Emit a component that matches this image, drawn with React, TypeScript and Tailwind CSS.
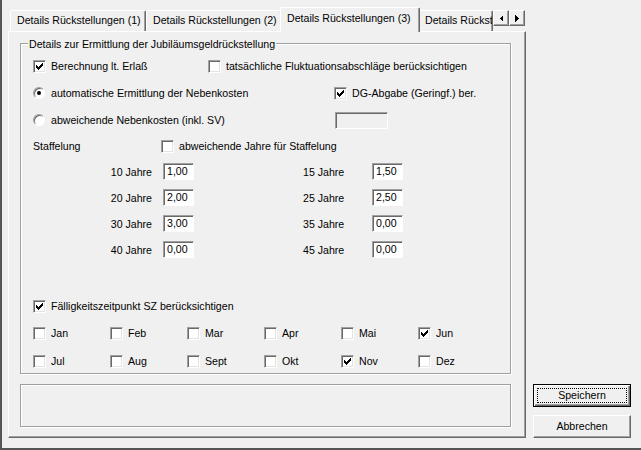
import React from 'react';

const CHECK = [
    '......X',
    '.....XX',
    'X...XXX',
    'XX.XXX.',
    'XXXXX..',
    '.XXX...',
    '..X....',
];

const CheckMark = () => (
    <svg width="7" height="7" viewBox="0 0 7 7" shapeRendering="crispEdges">
        {CHECK.map((row, y) =>
            row.split('').map((c, x) =>
                c === 'X' ? <rect key={`${x}-${y}`} x={x} y={y} width="1" height="1" fill="#000" /> : null
            )
        )}
    </svg>
);

const CheckBox = ({ checked }: { checked?: boolean }) => (
    <div className="w-[13px] h-[13px] shrink-0 bg-white border border-t-[#a0a0a0] border-l-[#a0a0a0] border-r-white border-b-white shadow-[inset_1px_1px_0_#696969,inset_-1px_-1px_0_#e3e3e3] flex items-center justify-center">
        {checked && <CheckMark />}
    </div>
);

const Radio = ({ checked }: { checked?: boolean }) => (
    <div className="w-[13px] shrink-0 flex">
        <div className="w-[12px] h-[12px] rounded-full bg-white border border-t-[#a0a0a0] border-l-[#a0a0a0] border-r-white border-b-white shadow-[inset_1px_1px_0_#696969] flex items-center justify-center">
            {checked && <div className="w-[4px] h-[4px] rounded-full bg-black" />}
        </div>
    </div>
);

const TextBox = ({ value, className }: { value?: string; className: string }) => (
    <div
        className={`h-[17px] shrink-0 border border-t-[#a0a0a0] border-l-[#a0a0a0] border-r-white border-b-white shadow-[inset_1px_1px_0_#696969] pl-[3px] leading-[15px] ${className}`}
    >
        {value}
    </div>
);

const Check = ({ label, checked, width }: { label: string; checked?: boolean; width?: string }) => (
    <div className={`flex items-center gap-[5px] shrink-0 ${width ?? ''}`}>
        <CheckBox checked={checked} />
        <span className="whitespace-nowrap pt-px">{label}</span>
    </div>
);

const Tab = ({ label, active, className }: { label: string; active?: boolean; className?: string }) =>
    active ? (
        <div className="relative z-10 w-[140px] h-[25px] -mx-[2px] -mb-px shrink-0 bg-[#f0f0f0] border-t border-l border-white border-r border-r-[#696969] rounded-t-[2px] shadow-[inset_-1px_0_0_#a0a0a0] pl-[6px] pt-[4px] leading-[13px] whitespace-nowrap">
            {label}
        </div>
    ) : (
        <div
            className={`h-[21px] shrink-0 border-t border-l border-white border-r border-r-[#696969] rounded-t-[2px] shadow-[inset_-1px_0_0_#a0a0a0] pl-[6px] pt-[3px] leading-[13px] whitespace-nowrap overflow-hidden ${className ?? 'w-[136px]'}`}
        >
            {label}
        </div>
    );

const ArrowButton = ({ dir }: { dir: 'left' | 'right' }) => (
    <div className="w-[16px] h-[16px] bg-[#f0f0f0] border border-t-white border-l-white border-r-[#696969] border-b-[#696969] shadow-[inset_-1px_-1px_0_#a0a0a0] flex items-center justify-center">
        <svg width="4" height="7" viewBox="0 0 4 7" shapeRendering="crispEdges">
            {dir === 'left' ? <path d="M4 0v7L0.5 3.5z" fill="#000" /> : <path d="M0 0v7l3.5-3.5z" fill="#000" />}
        </svg>
    </div>
);

const JAHRE = [
    [10, '1,00', 15, '1,50'],
    [20, '2,00', 25, '2,50'],
    [30, '3,00', 35, '0,00'],
    [40, '0,00', 45, '0,00'],
] as const;

const MONTHS: [string, boolean][][] = [
    [['Jan', false], ['Feb', false], ['Mar', false], ['Apr', false], ['Mai', false], ['Jun', true]],
    [['Jul', false], ['Aug', false], ['Sept', false], ['Okt', false], ['Nov', true], ['Dez', false]],
];

const App = () => {
    return (
        <div className="w-[641px] h-[450px] bg-[#f0f0f0] border-l-2 border-b-2 border-[#555555] flex font-['Liberation_Sans',Arial,sans-serif] text-[10.6px] text-black overflow-hidden">
            {/* tab control */}
            <div className="ml-[6px] mt-[7px] w-[518px] flex flex-col">
                <div className="h-[24px] flex items-end pl-[2px]">
                    <Tab label="Details Rückstellungen (1)" />
                    <Tab label="Details Rückstellungen (2)" />
                    <Tab label="Details Rückstellungen (3)" active />
                    <Tab label="Details Rückstellungen (4)" className="w-[75px]" />
                    <div className="self-start mt-[3px] flex">
                        <ArrowButton dir="left" />
                        <ArrowButton dir="right" />
                    </div>
                </div>

                <div className="h-[407px] border-t border-l border-white border-r border-b border-r-[#696969] border-b-[#696969] shadow-[inset_-1px_-1px_0_#a0a0a0] pl-[11px] pt-[11px] flex flex-col">
                    {/* group box */}
                    <div className="relative w-[491px] h-[331px] border border-[#a0a0a0] shadow-[inset_1px_1px_0_#fff,1px_1px_0_#fff] pl-[12px] flex flex-col leading-[13px]">
                        <span className="absolute -top-[6px] left-[7px] px-[1px] bg-[#f0f0f0] whitespace-nowrap">
                            Details zur Ermittlung der Jubiläumsgeldrückstellung
                        </span>

                        <div className="h-[20px] mt-[12px] flex items-center">
                            <Check label="Berechnung lt. Erlaß" checked width="w-[175px]" />
                            <Check label="tatsächliche Fluktuationsabschläge berücksichtigen" />
                        </div>

                        <div className="h-[20px] mt-[7px] flex items-center">
                            <div className="w-[301px] flex items-center gap-[5px]">
                                <Radio checked />
                                <span className="pt-px">automatische Ermittlung der Nebenkosten</span>
                            </div>
                            <Check label="DG-Abgabe (Geringf.) ber." checked />
                        </div>

                        <div className="h-[20px] mt-[7px] flex items-center">
                            <div className="w-[302px] flex items-center gap-[5px]">
                                <Radio />
                                <span className="pt-px">abweichende Nebenkosten (inkl. SV)</span>
                            </div>
                            <TextBox className="w-[53px] bg-[#f0f0f0]" />
                        </div>

                        <div className="h-[20px] mt-[6px] flex items-center">
                            <span className="w-[128px] pt-px">Staffelung</span>
                            <Check label="abweichende Jahre für Staffelung" />
                        </div>

                        {JAHRE.map(([a, av, b, bv], i) => (
                            <div key={a} className={`h-[17px] flex items-center -ml-[12px] ${i === 0 ? 'mt-[7px]' : 'mt-[9px]'}`}>
                                <span className="w-[131px] text-right pt-px">{a} Jahre</span>
                                <TextBox value={av} className="ml-[11px] w-[31px] bg-white" />
                                <span className="ml-[109px] w-[69px] pt-px">{b} Jahre</span>
                                <TextBox value={bv} className="w-[31px] bg-white" />
                            </div>
                        ))}

                        <div className="h-[20px] mt-[38px] flex items-center">
                            <Check label="Fälligkeitszeitpunkt SZ berücksichtigen" checked />
                        </div>

                        {MONTHS.map((row, i) => (
                            <div key={i} className={`h-[20px] flex items-center ${i === 0 ? 'mt-[7px]' : 'mt-[8px]'}`}>
                                {row.map(([m, c]) => (
                                    <Check key={m} label={m} checked={c} width="w-[77px]" />
                                ))}
                            </div>
                        ))}
                    </div>

                    {/* empty group box */}
                    <div className="mt-[10px] w-[491px] h-[43px] border border-[#a0a0a0] shadow-[inset_1px_1px_0_#fff,1px_1px_0_#fff]" />
                </div>
            </div>

            {/* buttons */}
            <div className="ml-[7px] w-[98px] flex flex-col justify-end gap-[8px] pb-[10px]">
                <button className="h-[23px] border border-black bg-[#f0f0f0] shadow-[inset_1px_1px_0_#fff,inset_-1px_-1px_0_#696969,inset_-2px_-2px_0_#a0a0a0] p-[3px] flex">
                    <span className="flex-1 border border-dotted border-black leading-[13px] flex items-center justify-center">
                        Speichern
                    </span>
                </button>
                <button className="h-[23px] border border-t-white border-l-white border-r-[#696969] border-b-[#696969] bg-[#f0f0f0] shadow-[inset_-1px_-1px_0_#a0a0a0] leading-[13px]">
                    Abbrechen
                </button>
            </div>
        </div>
    );
};

export default App;
